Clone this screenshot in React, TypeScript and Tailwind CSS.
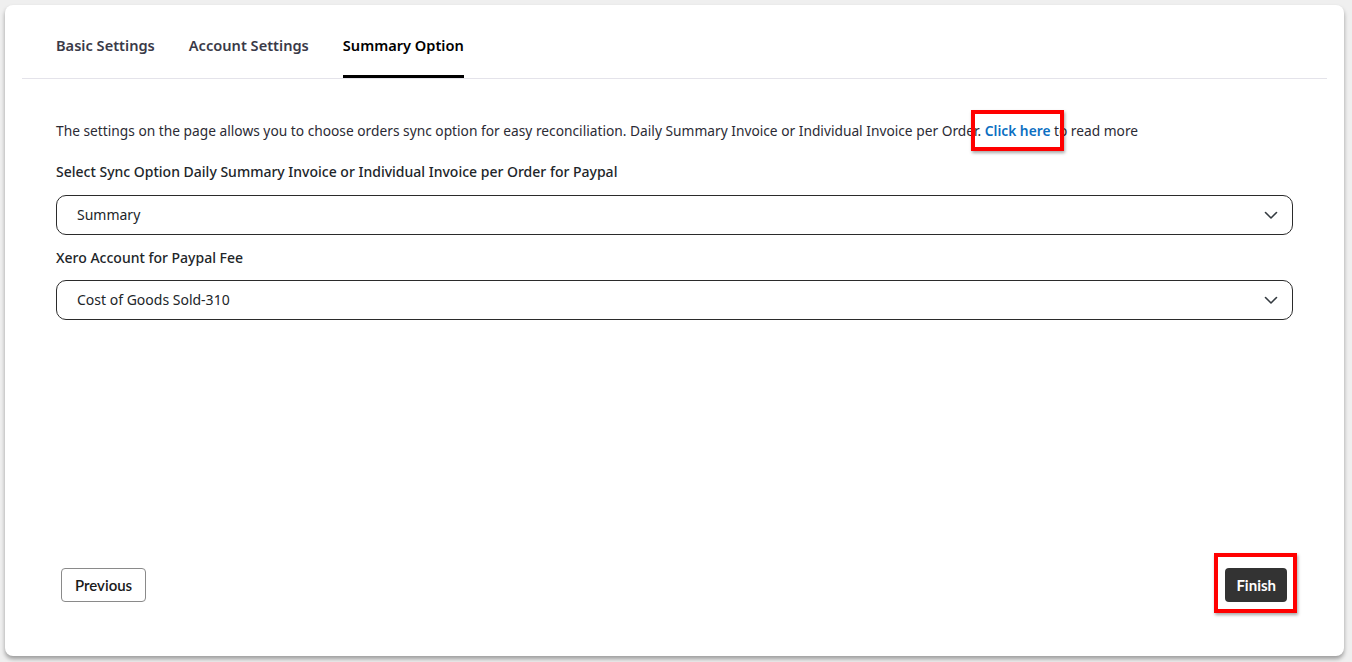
import React from "react";

function Chevron() {
  return (
    <svg width="16" height="16" viewBox="0 0 16 16" fill="none" className="shrink-0">
      <path d="M2.5 5.5 L8 11 L13.5 5.5" stroke="#343a40" strokeWidth="1.6" strokeLinecap="round" strokeLinejoin="round" />
    </svg>
  );
}

function Select({ value }: { value: string }) {
  return (
    <div className="flex h-[40px] items-center justify-between rounded-[10px] border border-[#2b2b2b] pl-[20px] pr-[13px] text-[14px] text-[#212529]">
      <span>{value}</span>
      <Chevron />
    </div>
  );
}

export default function App() {
  return (
    <div className="min-h-[662px] bg-[#efefef] pl-[5px] pr-[8px] pt-[5px] pb-[6px]" style={{ fontFamily: '"Noto Sans", "Open Sans", sans-serif' }}>
      <div className="flex h-[651px] flex-col rounded-[8px] bg-white shadow-[0_3px_4px_rgba(0,0,0,0.35)]">
        <div className="mx-[17px] flex gap-[34px] border-b border-[#e4e3ea] pl-[34px] pt-[30px]">
          <div className="pb-[21px] text-[14.6px] font-semibold text-[#3a3a48]">Basic Settings</div>
          <div className="pb-[21px] text-[14.6px] font-semibold text-[#3a3a48]">Account Settings</div>
          <div className="border-b-[3px] border-black pb-[18px] text-[14.6px] font-semibold text-black">Summary Option</div>
        </div>
        <div className="flex flex-1 flex-col px-[51px]">
          <p className="mt-[42px] text-[13.75px] text-[#2b2b35]">
            The settings on the page allows you to choose orders sync option for easy reconciliation. Daily Summary Invoice or Individual Invoice per Order.{" "}
            <span className="relative">
              <span className="font-semibold text-[#0b6fc2]">Click here</span>
              <span className="pointer-events-none absolute left-[-14px] right-[-14px] top-[-11px] bottom-[-11px] border-[4px] border-[#ff0000] shadow-[1px_2px_3px_rgba(0,0,0,0.35)]" />
            </span>{" "}
            to read more
          </p>
          <div className="mt-[19px] text-[14px] font-medium text-[#212529]">Select Sync Option Daily Summary Invoice or Individual Invoice per Order for Paypal</div>
          <div className="mt-[13px]">
            <Select value="Summary" />
          </div>
          <div className="mt-[12px] text-[14px] font-medium text-[#212529]">Xero Account for Paypal Fee</div>
          <div className="mt-[12px]">
            <Select value="Cost of Goods Sold-310" />
          </div>
          <div className="mt-auto mb-[54px] flex items-center justify-between pl-[5px] pr-[6px]">
            <button className="h-[34px] rounded-[4px] border border-[#8a8a8a] bg-white px-[13px] text-[15px] font-semibold text-[#1a1a1a]" style={{ fontFamily: "Lato, sans-serif" }}>
              Previous
            </button>
            <div className="relative">
              <button className="h-[34px] rounded-[4px] bg-[#333333] px-[11px] text-[15px] font-bold text-white" style={{ fontFamily: "Lato, sans-serif" }}>
                Finish
              </button>
              <span className="pointer-events-none absolute left-[-11px] right-[-10px] top-[-15px] bottom-[-11px] border-[4px] border-[#ff0000] shadow-[1px_2px_3px_rgba(0,0,0,0.35)]" />
            </div>
          </div>
        </div>
      </div>
    </div>
  );
}
